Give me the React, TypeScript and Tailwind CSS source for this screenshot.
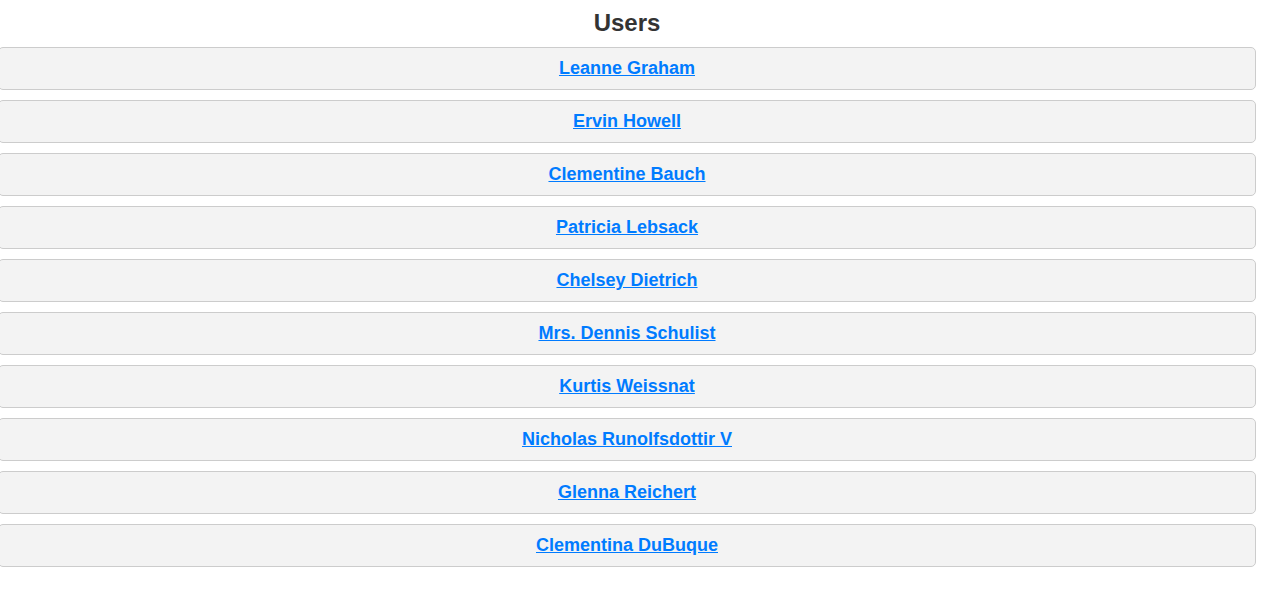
const users = [
  "Leanne Graham",
  "Ervin Howell",
  "Clementine Bauch",
  "Patricia Lebsack",
  "Chelsey Dietrich",
  "Mrs. Dennis Schulist",
  "Kurtis Weissnat",
  "Nicholas Runolfsdottir V",
  "Glenna Reichert",
  "Clementina DuBuque",
]

export default function App() {
  return (
    <div className="bg-white overflow-hidden">
      <div className="-ml-[2px] w-[1258px] font-['Liberation_Sans',Arial,sans-serif]">
        <h2 className="pt-[9px] pb-[10px] text-center text-[24px] leading-[28px] font-bold text-[#333]">Users</h2>
        <ul className="flex flex-col gap-[10px] pb-[34px]">
          {users.map((name) => (
            <li
              key={name}
              className="h-[43px] flex items-center justify-center rounded-[5px] border border-[#cccccc] bg-[#f3f3f3]"
            >
              <a href="#" className="text-[18px] leading-[21px] font-bold text-[#007bff] underline">
                {name}
              </a>
            </li>
          ))}
        </ul>
      </div>
    </div>
  )
}
